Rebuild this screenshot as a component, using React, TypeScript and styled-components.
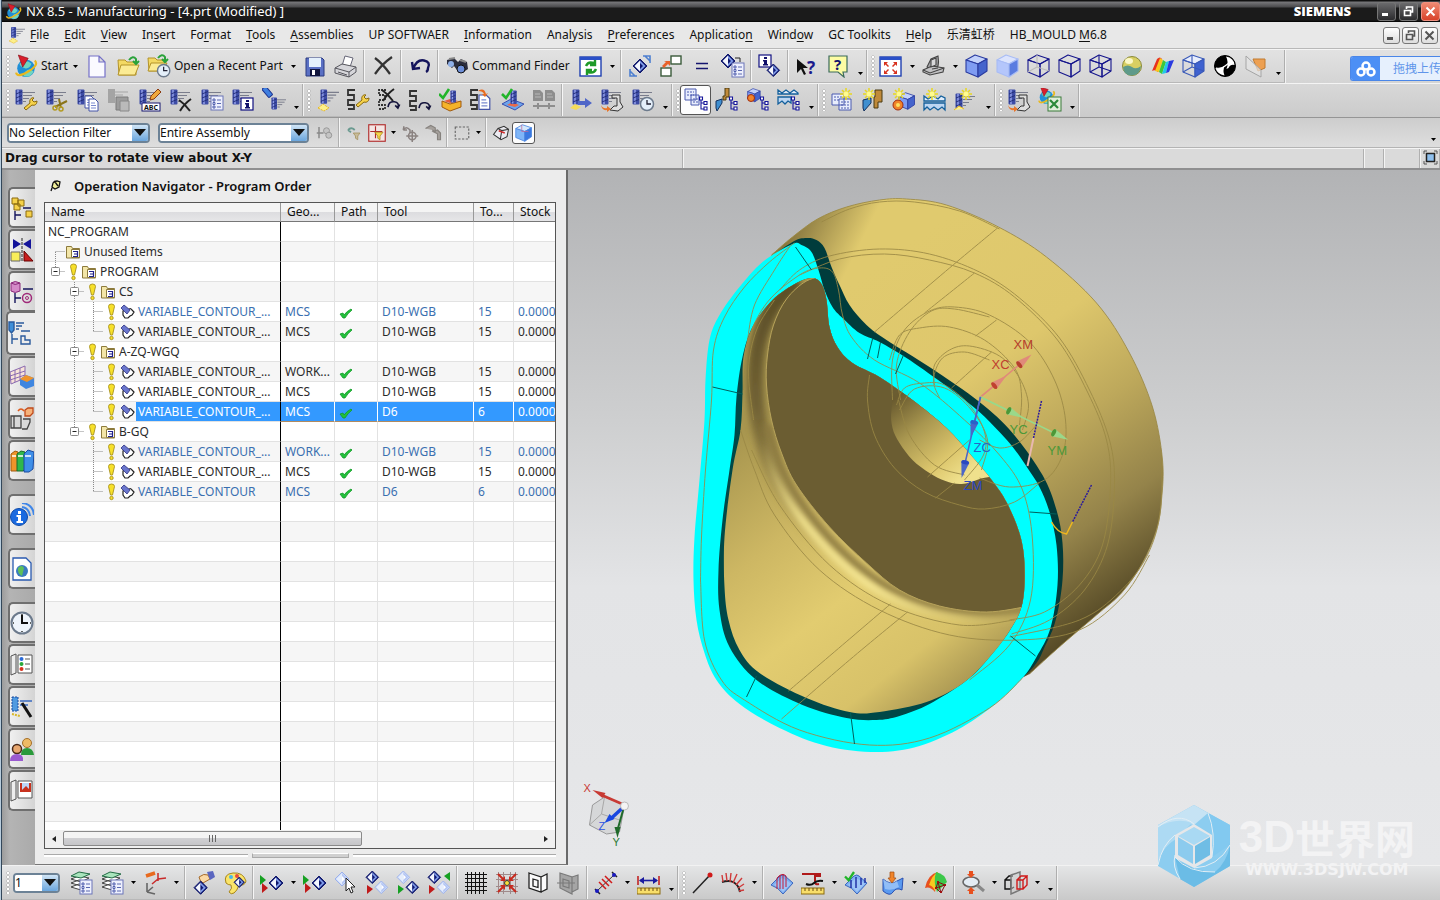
import React from 'react';
import styled, { createGlobalStyle, css } from 'styled-components';

const GlobalStyle = createGlobalStyle`
  * { box-sizing: border-box; }
  html, body { margin: 0; padding: 0; }
  body {
    font-family: "Noto Sans", "Noto Sans CJK SC", sans-serif;
    font-size: 12px;
    line-height: 16px;
    color: #111;
    background: #d9d9d9;
    overflow: hidden;
  }
  button, select { font: inherit; color: inherit; }
`;

/* ---------- icon pieces (24 x 24 grid) ---------- */

type Pos = { x?: number; y?: number; s?: number };
const at = ({ x = 0, y = 0, s = 1 }: Pos) => `translate(${x} ${y}) scale(${s})`;

const Drill = (p: Pos & { lines?: boolean; c?: string }) => {
  const { lines = true, c = '#3d4ca6' } = p;
  return (
    <g transform={at(p)}>
      {lines && <path d="M7 3.500h13M8 6.500h9M8 9.500h6M8 12.500h3" stroke="#7a7d8c" strokeWidth="1.200" />}
      <rect x="0.500" y="0.500" width="7" height="15" rx="1" fill={c} />
      <path d="M3 1v14" stroke="#8e9be6" strokeWidth="1.600" />
      <path d="M1 5l6-2.500M1 9l6-2.500M1 13l6-2.500" stroke="#1f2a74" strokeWidth=".9" />
    </g>
  );
};
const Wrench = (p: Pos) => (
  <g transform={at(p)}>
    <path d="M1 11L7 6C6 3 8 0 11 1L9 3l2 2 3-1c0 3-2 5-5 4L3 13Z" fill="#f6d24a" stroke="#8a6a10" strokeWidth="1" />
  </g>
);
const Cross = (p: Pos & { c?: string }) => (
  <path transform={at(p)} d="M0 1Q6 5 11 12M12 0Q5 5 1 12" fill="none" stroke={p.c || '#222'} strokeWidth="2" />
);
const Sheet = (p: Pos & { c?: string }) => (
  <g transform={at(p)}>
    <path d="M0 0h6l3 3v9H0Z" fill={p.c || '#fff'} stroke="#4454a8" />
    <path d="M2 4h4M2 6.500h5M2 9h5" stroke="#7a8ad0" />
  </g>
);
const ListBox = (p: Pos) => (
  <g transform={at(p)}>
    <rect width="12" height="14" fill="#eef0fd" stroke="#6a74b8" />
    <path d="M2 3h2v2H2zM2 6.500h2v2H2zM2 10h2v2H2z" fill="none" stroke="#4454a8" strokeWidth=".9" />
    <path d="M6 4h4M6 7.500h4M6 11h4" stroke="#5a68b0" />
  </g>
);
const InfoBox = (p: Pos) => (
  <g transform={at(p)}>
    <rect width="12" height="12" fill="#fff" stroke="#101080" strokeWidth="1.200" />
    <path d="M5 2h3v2H5zM4 5h4v4h1v1.500H4V9h1V6.500H4z" fill="#10106a" />
  </g>
);
const Clock = (p: Pos) => (
  <g transform={at(p)}>
    <circle cx="7" cy="7" r="6.500" fill="#e4effa" stroke="#6c7a8c" strokeWidth="1.500" />
    <path d="M7 3v4h4" fill="none" stroke="#223" strokeWidth="1.300" />
  </g>
);
const Diamond = (p: Pos & { faded?: boolean }) => (
  <g transform={at(p)}>
    <path d="M7 0l7 7-7 7-7-7Z" fill={p.faded ? '#cfdcfa' : '#10186e'} stroke={p.faded ? '#9ab0ec' : '#10186e'} />
    <path d="M7 1.500L1.500 7 7 12.500Z" fill={p.faded ? '#e6eefc' : '#f4f7ff'} />
    <path d="M7 1.500L12.500 7 7 12.500Z" fill={p.faded ? '#b4c6f4' : '#7f9cea'} />
    <path d="M7 4v6l3-3Z" fill={p.faded ? '#fff' : '#10186e'} />
  </g>
);
const Spark = (p: Pos) => (
  <g transform={at(p)}>
    <path d="M6 0v12M0 6h12M2 2l8 8M10 2l-8 8" stroke="#e8d820" strokeWidth="1.500" />
    <circle cx="6" cy="6" r="2.500" fill="#fffb90" />
  </g>
);
const Tree = (p: Pos) => (
  <g transform={at(p)} fill="none" stroke="#15159a" strokeWidth="1.100">
    <path d="M2 3v9h3M2 6h3" />
    <path d="M0.500 0h3v3h-3zM5 4.500h3v3H5zM5 10h3v3H5z" fill="#fff" />
  </g>
);
const Globe = (p: Pos) => (
  <g transform={at(p)}>
    <circle cx="10" cy="12" r="8" fill="#1f8fd8" />
    <path d="M4 8q6-5 11 0q-2 5-6 4t-5-4M8 19q0-5 6-6l3 2q-3 6-9 4" fill="#6fd6c0" />
    <path d="M18 5q4 4-6 10T1 16" fill="none" stroke="#e8b820" strokeWidth="2" />
    <path d="M3 0l9 3-5 8Z" fill="#d81e2c" stroke="#8a0f18" strokeWidth=".6" />
  </g>
);
const Snake = (p: Pos & { dash?: boolean }) => (
  <path transform={at(p)} d="M9 2H2v5h6v5H2v5h6v4H2" fill="none" stroke="#333" strokeWidth="1.800" strokeDasharray={p.dash ? '2 1' : undefined} />
);
const Check = (p: Pos) => (
  <path transform={at(p)} d="M0 5l4 4 6-9" fill="none" stroke="#22b52a" strokeWidth="2.600" />
);
const Cube = ({ fill, top, right, edges = '#15158c', inner, x = 0, y = 0, s = 1 }: Pos & { fill?: string; top?: string; right?: string; edges?: string; inner?: string }) => (
  <g transform={at({ x, y, s })} strokeLinejoin="round" stroke={edges} strokeWidth="1.100">
    <path d="M1 6L10 1l12 4-9 5Z" fill={top || 'none'} />
    <path d="M1 6l12 4v13L1 18Z" fill={fill || 'none'} />
    <path d="M13 10l9-5v12l-9 6Z" fill={right || 'none'} />
    {inner && <path d="M10 1v12l12 4M10 13l-9 5" fill="none" stroke={inner} />}
  </g>
);
const Go = (p: Pos) => (
  <g transform={at(p)}>
    <path d="M0 0l6 5-6 5Z" fill="#16a022" />
    <path d="M2 8l6 5-6 5Z" fill="#c01a1a" />
  </g>
);
const Layers = () => (
  <g>
    <path d="M2 16l8-3 10 2-8 4ZM2 12l8-3 10 2-8 4ZM2 8l8-3 10 2-8 4Z" fill="#fff" stroke="#444" />
    <path d="M2 5l8-4 11 2-9 4Z" fill="#a8e4bc" stroke="#226a44" />
    <ListBox x={11} y={9} />
  </g>
);
const Program = () => <Drill s={1} x={1} y={1} />;
const Ruler = (p: Pos) => (
  <g transform={at(p)}>
    <rect x="0" y="0" width="23" height="6" fill="#f8de6a" stroke="#8a6a10" />
    <path d="M4 0v3M8 0v3M12 0v3M16 0v3M20 0v3" stroke="#6a4a10" />
  </g>
);
const Redo = (p: Pos & { c?: string }) => (
  <path transform={at(p)} d="M0 8Q1 1 7 2T11 8M8 6l3 3 2-4" fill="none" stroke={p.c || '#14143c'} strokeWidth="1.800" />
);
const BluePatch = () => (
  <g>
    <path d="M1 14L10 5q3-2 5 0l8 7-10 11Q8 16 1 14Z" fill="#7fb0f2" stroke="#3a66c0" />
    <path d="M4 14l8-7q8 4 9 6l-8 8Q9 16 4 14Z" fill="#a9cdfa" opacity=".7" />
  </g>
);

const ICONS: Record<string, React.ReactNode> = {
  start: <Globe x={1} y={1} s={1.1} />,
  new: <path d="M4 2h10l6 6v15H4ZM14 2v6h6" fill="#fafaff" stroke="#7470c8" strokeWidth="1.200" />,
  open: <g><path d="M2 6h7l2 2h9v13H3Z" fill="#f3d963" stroke="#b3932a" /><path d="M5 11h18l-4 10H2Z" fill="#fbeb94" stroke="#b3932a" /><path d="M13 6q4-5 7-1v4M17 7l3 3 3-3" fill="none" stroke="#2aa23a" strokeWidth="2" /></g>,
  recent: <g><path d="M1 4h7l2 2h8v11H2Z" fill="#f3d963" stroke="#b3932a" /><path d="M4 9h16l-4 8H1Z" fill="#fbeb94" stroke="#b3932a" /><path d="M11 4q4-5 7-1v4M15 5l3 3 3-3" fill="none" stroke="#2aa23a" strokeWidth="2" /><Clock x={10} y={10} s={.95} /></g>,
  save: <g><path d="M3 4h16l2 2v16H3Z" fill="#5a70c4" stroke="#2a3a80" /><path d="M6 4h12v9H6Z" fill="#e4f0fc" /><path d="M7 15h10v7H7Z" fill="#10143c" /><path d="M9 16h3v5H9Z" fill="#fff" /></g>,
  print: <g><path d="M8 12L11 2l8 2-3 9Z" fill="#fff" stroke="#667" /><path d="M1 14l7-4 14 3v5l-7 5-14-4Z" fill="#d6d6da" stroke="#55555c" /><path d="M1 14l14 4 7-5M15 18v5M4 18l9 3" fill="none" stroke="#55555c" /></g>,
  delete: <path d="M4 4Q12 10 19 20M21 3Q11 10 4 20" fill="none" stroke="#333" strokeWidth="2.200" />,
  undo: <path d="M4 8l1 7 7-1M5 15Q9 5 16 6.500T20 14Q20 17 18 18" fill="none" stroke="#14145c" strokeWidth="2.400" />,
  finder: <g><path d="M2 6l7-2 4 4 3-3 6 3 1 7-6 4-5-3-3-4-2 2-5-4Z" fill="#2a2c3c" /><circle cx="6" cy="10" r="3" fill="#8fb0e8" /><circle cx="16" cy="15" r="4" fill="#6d8fd8" stroke="#111" /><path d="M4 5l6-1M15 6l6 2" stroke="#888" strokeWidth="2" /></g>,
  refresh: <g><rect x="1" y="3" width="21" height="19" fill="#fff" stroke="#1f3fb0" strokeWidth="1.400" /><path d="M1 3h21v3H1Z" fill="#2a50c8" /><path d="M7 12q2-5 8-3M16 6v5h-5M17 15q-2 5-8 3M8 21v-5h5" fill="none" stroke="#1f9a28" strokeWidth="2.400" /></g>,
  orient: <g><Diamond x={5} y={5} /><path d="M15 2h7v7M9 22H2v-7M17 2l5 5M2 17l5 5" fill="none" stroke="#4d7fd0" strokeWidth="1.600" /></g>,
  move: <g><rect x="12" y="2" width="10" height="8" fill="#fff" stroke="#3a5a3a" strokeWidth="1.400" /><rect x="2" y="14" width="10" height="8" fill="#fff" stroke="#3a5a3a" strokeWidth="1.400" /><path d="M3 12l4-4-2-1h6v5l-2-2-4 4Z" fill="#e8622a" /></g>,
  equals: <path d="M6 9.500h12M6 14.500h12" stroke="#14146e" strokeWidth="1.600" />,
  props: <g><Diamond x={0} y={0} /><path d="M14 4h5v4" fill="none" stroke="#222" /><ListBox x={11} y={9} /></g>,
  info: <g><InfoBox x={1} y={1} /><Diamond x={9} y={10} s={.9} /></g>,
  whats: <g><path d="M2 5v14l4-4 3 6 2-1-3-6h5Z" fill="#111" /><text x="12" y="20" fontFamily="Noto Sans" fontWeight="700" fontSize="17" fill="#1a1a8c">?</text></g>,
  help: <g><path d="M3 2h18v16h-4l1 5-6-5H3Z" fill="#fdfca4" stroke="#3a6a5a" strokeWidth="1.200" /><text x="8" y="16" fontFamily="Noto Sans" fontWeight="700" fontSize="15" fill="#14146e">?</text></g>,
  fit: <g><rect x="1" y="3" width="21" height="19" fill="#fff" stroke="#1f3fb0" strokeWidth="1.400" /><path d="M1 3h21v3H1Z" fill="#2a50c8" /><path d="M5 8h4l-1.500 1.500L10 12l-1 1-2.500-2.500L5 12ZM18 8h-4l1.500 1.500L13 12l1 1 2.500-2.500L18 12ZM5 20h4l-1.500-1.500L10 16l-1-1-2.500 2.500L5 16ZM18 20h-4l1.500-1.500L13 16l1-1 2.500 2.500L18 16Z" fill="#d8321e" /></g>,
  rotate: <g stroke="#444" strokeWidth="1.100"><path d="M5 13L9 5l7-3q1 6 0 10l-8 4Z" fill="#a4a4a6" /><path d="M1 16l9-4 12 2-1 4-13 3-7-3Z" fill="#c2c2c4" /><path d="M9 6l5-2v7l-5 2Z" fill="#d8d8da" /><path d="M1 16l7 3 14-5M10 15l6-1" fill="none" /></g>,
  shadedEdges: <Cube top="#c3d2fb" fill="#7f9cf2" right="#4564cc" edges="#2a3ba0" />,
  shaded: <Cube top="#dce4fd" fill="#b4c6fb" right="#5a7ce0" edges="#a8bcf5" />,
  wireDim: <Cube inner="#bbb" />,
  wireHidden: <Cube />,
  wireStatic: <Cube inner="#15158c" />,
  studio: <g><circle cx="12" cy="12" r="9.500" fill="#d8cf62" stroke="#8a8a3a" /><path d="M3 13q5-3 9 0t9-1q-1 9-9 9.500T3 13" fill="#5e9a8a" /><ellipse cx="9" cy="7" rx="4" ry="3" fill="#fbf8c8" /></g>,
  analysis: <g><path d="M1 17L6 5q3-3 5 0l-4 13q-3-3-6-1" fill="#e8321e" /><path d="M4 17L9 4l3 2-4 12Z" fill="#f8c81e" /><path d="M8 18l4-12 3 2-4 12Z" fill="#3cc83c" /><path d="M11 20l4-12 3-1-3 12Z" fill="#22c8e8" /><path d="M15 19l3-12 5-1-5 12Z" fill="#2a3ae0" /></g>,
  partial: <Cube right="#3f62d0" top="#e8eefc" edges="#3a5ab8" inner="#3a5ab8" />,
  reflect: <g><circle cx="12" cy="12" r="10.500" fill="#000" stroke="#000" /><path d="M13 2.500Q21 4 21.500 11q-4-1-6 3l-2 1Q16 8 13 2.500Z" fill="#fff" /><path d="M2.500 14q6 1 9-2-2 5 0 9.500Q4 20 2.500 14Z" fill="#fff" /><path d="M3 14q6 1 9-2t7-4" fill="none" stroke="#fff" strokeWidth="1.200" /></g>,
  section: <g><path d="M9 5h12v9l-7 3Z" fill="#eda052" stroke="#c07a30" /><path d="M2 2l15 14v7L2 15Z" fill="#e4e4e4" fillOpacity=".7" stroke="#a5a5a5" /></g>,

  opEdit: <g><Program /><Wrench x={9} y={9} /></g>,
  opCut: <g><Program /><path d="M10 19l12-6M14 11l2 9" stroke="#8a741a" strokeWidth="2" /><circle cx="10" cy="20" r="2" fill="none" stroke="#b39a20" strokeWidth="1.500" /><circle cx="16" cy="21" r="2" fill="none" stroke="#b39a20" strokeWidth="1.500" /></g>,
  opCopy: <g><Program /><Sheet x={9} y={8} /><Sheet x={13} y={11} /></g>,
  opPaste: <g opacity=".8"><path d="M1 1h7v14H1Z" fill="#999" /><path d="M8 4h13M8 7h8" stroke="#999" strokeWidth="1.200" /><path d="M9 9h12v13H9Z" fill="#8f8f8f" stroke="#666" /><path d="M13 13h9v10h-9Z" fill="#b5b5b5" stroke="#777" /></g>,
  opRename: <g><Program /><path d="M12 12l1-4 7-7 3 3-7 7Z" fill="#f0a83a" stroke="#8a3a10" /><rect x="4" y="15" width="18" height="8" fill="#fff" stroke="#14146e" /><text x="6" y="22" fontFamily="Noto Sans" fontSize="7" fontWeight="700" fill="#111">ABC</text></g>,
  opDelete: <g><Program /><Cross x={10} y={11} /></g>,
  opProps: <g><Program /><ListBox x={11} y={8} /></g>,
  opInfo: <g><Program /><InfoBox x={10} y={10} /></g>,
  opShow: <g><g transform="rotate(-40 6 4)"><rect x="3" y="-2" width="5" height="11" rx="1" fill="#3f7fe0" stroke="#1a2f8c" /></g><Drill x={9} y={9} s={.8} /></g>,
  generate: <g><Drill x={5} y={1} s={.95} /><path d="M3 20l5-4 6 4-5 3Z" stroke="#e8b820" fill="#fdf08a" strokeDasharray="2 1" /></g>,
  pathEdit: <g><Snake /><Wrench x={9} y={6} /></g>,
  pathDelete: <g><Snake x={0} dash /><Cross x={5} y={1} /><Redo x={11} y={12} s={.9} /></g>,
  pathReplay: <g><Snake x={0} y={1} /><Redo x={11} y={13} s={.9} /></g>,
  verify: <g><path d="M3 13l8 3 11-3v6l-11 4-8-4Z" fill="#f5b32a" stroke="#a05a10" /><path d="M5 13l6 2 8-2-8-2Z" fill="#e85a3a" /><Drill x={11} y={2} lines={false} s={.8} /><Check x={0} y={1} /></g>,
  listPath: <g><Snake x={-1} y={0} /><Sheet x={9} y={7} s={1.2} /><path d="M8 3q6-4 8 3l2-1-3 4-3-3h2q-1-3-6-3" fill="#e86a1e" /></g>,
  simulate: <g><path d="M1 16l9-5 13 5-9 6Z" fill="#6da5ec" stroke="#3a50b0" /><path d="M6 17l5-3 7 3-4 2Z" fill="#e86a4a" /><Drill x={9} y={2} lines={false} s={.9} /><Check x={1} y={1} /></g>,
  compare: <g fill="#8e8e8e"><path d="M1 2h7l3 3v8H1ZM13 2h7l3 3v8H13Z" /><path d="M1 18h22M6 15v6M17 15v6" stroke="#8e8e8e" strokeWidth="2" /><path d="M3 6h5M3 9h6M15 6h5M15 9h6" stroke="#b8b8b8" /></g>,
  feed: <g><Drill x={3} y={1} lines={false} /><path d="M9 13h7v-3l7 5-7 5v-3H9Z" fill="#4f66c8" /><path d="M1 20l5-4 6 3-5 3Z" fill="#f4dc5a" /></g>,
  post: <g><Program /><path d="M12 7h8v7l3 5-5 4-8-1 4-4h3v-8h-5Z" fill="#dedede" stroke="#333" /><path d="M1 17q2 4 6 3v-2l4 3-4 3v-2q-5 1-6-5" fill="#e8762a" /></g>,
  shop: <g><Program /><Clock x={9} y={9} /></g>,
  viewProgram: <g><path d="M1 1h11v11H1ZM7 7h8v10H7Z" fill="#e8edfc" stroke="#4a5ab0" /><path d="M3 4h7M3 7h7M9 11h5M9 14h5" stroke="#4a5ab0" strokeDasharray="2 1" /><Tree x={15} y={9} /></g>,
  viewTool: <g><path d="M10 0h4v9h-3v3H8V8h2Z" fill="#c08a3a" stroke="#4a3a10" /><path d="M1 13l6-2v4l-5 8-1-3Z" fill="#3f8fd0" stroke="#14305c" /><Tree x={14} y={9} /></g>,
  viewGeom: <g><Cube x={1} y={0} s={.6} top="#c3d2fb" fill="#7f9cf2" right="#4564cc" edges="#2a3ba0" /><circle cx="5" cy="10" r="3.500" fill="#f0842a" stroke="#a02a10" /><Tree x={14} y={9} /></g>,
  viewMethod: <g><path d="M1 6V2l4 3 4-3 4 3 4-3 4 3V6Z" fill="#e0ecfa" stroke="#14609c" strokeWidth="1.300" /><path d="M1 9h13v6l-3-2-3 3-3-3-4 3Z" fill="#bcd6f2" stroke="#14609c" strokeWidth="1.300" /><Tree x={14} y={9} /></g>,
  newProgram: <g><path d="M2 6h12v11H2ZM9 11h12v11H9Z" fill="#e8edfc" stroke="#4a5ab0" /><path d="M4 9h8M4 12h5M11 14h8M11 17h8M11 20h8" stroke="#4a5ab0" strokeDasharray="2 1" /><Spark x={10} y={0} /></g>,
  newTool: <g><path d="M14 2h7v12h-4v6h-4V9h1Z" fill="#c08a3a" stroke="#4a3a10" /><path d="M2 12l8-2v5l-7 8-1-3Z" fill="#3f8fd0" stroke="#14305c" /><Spark x={2} y={0} /></g>,
  newGeom: <g><Cube x={6} y={4} s={.75} top="#c3d2fb" fill="#7f9cf2" right="#4564cc" edges="#2a3ba0" /><circle cx="6" cy="17" r="5" fill="#f0842a" stroke="#a02a10" /><circle cx="6" cy="17" r="2" fill="#fce060" /><Spark x={1} y={0} /></g>,
  newMethod: <g><path d="M1 13V8l4 3 5-3 5 3 3-3 4 2v3Z" fill="#e0ecfa" stroke="#14609c" strokeWidth="1.300" /><path d="M1 15h21v7l-3-3-4 3-4-3-4 3-3-3-3 3Z" fill="#bcd6f2" stroke="#14609c" strokeWidth="1.300" /><Spark x={3} y={0} /></g>,
  newOp: <g><Drill x={1} y={5} /><Spark x={6} y={0} /><path d="M0 22l5-4 5 3" fill="#fdf08a" stroke="#e8b820" /></g>,
  excel: <g><Globe x={0} y={-1} s={.85} /><rect x="10" y="9" width="13" height="14" fill="#dfeeda" stroke="#3a7a3a" /><path d="M12 12l8 8M20 12l-8 8" stroke="#2a8a3a" strokeWidth="2.200" /></g>,

  layers: <Layers />,
  wcs: <g fill="none"><path d="M3 5l9-3" stroke="#e86a1e" strokeWidth="3.500" /><path d="M15 2v8M15 8l8-1M15 8l-6 5" stroke="#c82a2a" strokeWidth="1.500" /><path d="M4 12v9M4 21l8 2M4 21l6-5" stroke="#666" strokeWidth="1.600" /></g>,
  handDiamond: <g><path d="M7 6q5-4 9-2l2 4-7 4q-3-1-4-6" fill="#fbd9a4" stroke="#a56a2a" /><path d="M15 1l6-1 2 6-5 3Z" fill="#5a66c0" /><Diamond x={2} y={10} s={.95} /></g>,
  palette: <g><path d="M3 12Q0 3 10 2t13 8q-1 5-7 4-2 6-5 8t-5-1q4-4 2-7-3 0-5-2" fill="#fae46a" stroke="#a8861a" /><circle cx="8" cy="6" r="2" fill="#48b8e8" /><circle cx="14" cy="5" r="2" fill="#e84a3a" /><Diamond x={11} y={6} s={.75} /></g>,
  goDiamond: <g><Go x={0} y={4} /><Diamond x={9} y={5} /></g>,
  pickDiamond: <g><Diamond x={1} y={1} faded /><path d="M12 7v13l3-3 2 5 2-1-2-5h4Z" fill="#fff" stroke="#222" /></g>,
  two1: <g><Diamond x={1} y={0} s={.9} /><Diamond x={10} y={10} s={.9} faded /><path d="M2 14l6 4-6 5Z" fill="#c01a1a" /></g>,
  two2: <g><Diamond x={1} y={0} s={.9} faded /><Diamond x={10} y={10} s={.9} /><path d="M2 14l6 4-6 5Z" fill="#16a022" /></g>,
  two3: <g><Diamond x={1} y={0} s={.9} /><Diamond x={10} y={10} s={.9} faded /><path d="M2 14l6 4-6 5Z" fill="#c01a1a" /><path d="M23 1v9l-6-5Z" fill="#16a022" /></g>,
  grid: <path d="M3.500 1v22M7.500 1v22M11.500 1v22M15.500 1v22M19.500 1v22M1 3.500h22M1 7.500h22M1 11.500h22M1 15.500h22M1 19.500h22" stroke="#111" strokeWidth="1" />,
  snapGrid: <g><path d="M3.500 1v22M8.500 1v22M15.500 1v22M20.500 1v22M1 3.500h22M1 8.500h22M1 15.500h22M1 20.500h22" stroke="#a08a8a" /><path d="M3 3l7 7M21 3l-7 7M3 21l7-7M21 21l-7-7" stroke="#c82a1e" strokeWidth="2" /><path d="M10 5v5H5ZM14 5v5h5ZM10 19v-5H5ZM14 19v-5h5Z" fill="#c82a1e" /><circle cx="12" cy="12" r="2.500" fill="#f8e03a" stroke="#333" /></g>,
  plane: <path d="M3 2l12 4v15L3 17ZM15 6l6-3v15l-6 3M7 8l5 1.500v7L7 15Z" fill="#fafafa" stroke="#222" strokeWidth="1.300" />,
  planeDim: <path d="M3 2l12 4v17L3 17ZM15 6l6-2v14l-6 3M6 8l6 2v7l-6-2ZM0 12h18" fill="#a5a5a5" stroke="#7a7a7a" strokeWidth="1.200" />,
  distance: <g><path d="M1 18l5 5M18 1l5 5" stroke="#222" strokeWidth="1.500" /><path d="M3 20L20 4" stroke="#333" /><path d="M5 11l7 7M8 8l7 7M11 5l7 7" stroke="#d01a1a" strokeWidth="1.500" /><circle cx="3" cy="20" r="2" fill="#1a1ac0" /><circle cx="20" cy="4" r="2" fill="#1a1ac0" /></g>,
  measure: <g><path d="M1 5v9M22 5v9" stroke="#c01a1a" strokeWidth="1.500" /><path d="M3 9.500h17" stroke="#1a1aa0" strokeWidth="1.600" /><path d="M7 6L2 9.500 7 13ZM16 6l5 3.500-5 3.500Z" fill="#1a1aa0" /><Ruler x={0} y={17} /></g>,
  line: <g><path d="M3 22L20 4" stroke="#222" strokeWidth="1.500" /><circle cx="20" cy="4" r="2.500" fill="#d01a1a" /></g>,
  comb: <g><path d="M1 11Q16 7 19 21" fill="none" stroke="#222" strokeWidth="2" /><path d="M2 11L1 4M6 10L5 2M9 11l1-9M12 12l4-9M15 14l6-7M17 17l6-4M18 20l5-1" stroke="#d03a3a" strokeWidth="1.400" /></g>,
  faceCurve: <g><BluePatch /><path d="M7 18V7M10 18V4M13 18V3M16 16V5M7 7q5-6 9-2" fill="none" stroke="#c01a3a" /></g>,
  gauge: <g><path d="M1 3h18v2h-5v6q0 3 4 2" fill="none" stroke="#b01a1a" strokeWidth="2" /><path d="M5 13q5 2 8-1t9-2" fill="none" stroke="#111" strokeWidth="2" /><Ruler x={0} y={17} /></g>,
  checkPatch: <g><BluePatch /><path d="M7 17V9M12 17V6M17 14V7M21 12V7" stroke="#1a2aa0" strokeWidth="1.400" /><Check x={1} y={1} s={.9} /></g>,
  draft: <g><path d="M2 8q8 7 14 2l6-3-1 12q-6-3-9 2t-10-1Z" fill="#5a9af0" stroke="#2a50b0" /><path d="M2 8q8 7 14 2l2 6q-7 4-14 2Z" fill="#a9cdfa" opacity=".7" /><path d="M9 1h4v6h2l-4 5-4-5h2Z" fill="#f0842a" stroke="#a04a10" strokeWidth=".7" /></g>,
  rainbow: <g><path d="M1 17Q4 3 14 1l-3 20Q6 15 1 17" fill="#e8501e" /><path d="M5 14Q8 4 14 1l-3 19Q9 15 5 14Z" fill="#f8c81e" /><path d="M12 1q9 2 11 10l-10 10q-4-10-1-20Z" fill="#3cc84a" /><path d="M14 11l7 3-4 8-5-5ZM14 11l3 11M12 17l9-3" fill="none" stroke="#801010" /><path d="M13 10h2v2h-2zM20 13h2v2h-2zM16 20h2v2h-2zM11 16h2v2h-2z" fill="#a01010" /></g>,
  magnify: <g><ellipse cx="10" cy="11" rx="8" ry="5" fill="#e4ecf4" stroke="#666" strokeWidth="1.600" /><path d="M16 14l7 6" stroke="#888" strokeWidth="3" /><path d="M8 0h4v3h2l-4 4-4-4h2ZM8 23h4v-3h2l-4-4-4 4h2Z" fill="#e8501e" /></g>,
  sectionBox: <g fill="none" strokeWidth="1.400"><path d="M1 9h6v9H1ZM1 9l4-4h4M7 18l3-2" stroke="#111" /><path d="M7 4l9-3v18l-9 4Z" fill="#ccc" fillOpacity=".5" stroke="#777" /><path d="M13 9h6v9h-6ZM13 9l4-4h6l-4 4M23 5v9l-4 4" stroke="#d01a1a" /></g>,

  sOp: <g stroke="#8a8a8a" fill="#c4c4c4"><path d="M4 4v15M1 12h9" strokeWidth="2" /><circle cx="14" cy="9" r="4" /><circle cx="17" cy="15" r="4" /></g>,
  sFilter: <g><path d="M4 8q4-5 9 0M4 8l5-3M4 8l4 3" fill="none" stroke="#6a9a90" strokeWidth="2.400" /><path d="M11 12h9l-3 4v5l-3-2v-3Z" fill="#c8bc9a" stroke="#a08e5a" /></g>,
  sBox: <g><rect x="1" y="1" width="22" height="22" fill="#f4e6e4" stroke="#b02a2a" strokeWidth="1.500" /><path d="M10 3v16M3 10h16" stroke="#b02a2a" strokeWidth="1.500" /><path d="M9 11h11l-4 5v5l-3-2v-3Z" fill="#f5d848" stroke="#a8861a" /></g>,
  sDim: <g fill="none" stroke="#8a8280" strokeWidth="2"><path d="M3 8q4-6 9 0v4M3 8l1-5M3 8l5 0" /><circle cx="15" cy="16" r="5" /><path d="M15 8v16M7 16h16" /></g>,
  sHammer: <path d="M2 6l7-4 6 3v5l-4-2M12 10l6-2 4 4v9h-4v-8Z" fill="#a5a09c" stroke="#86827e" strokeWidth="1.500" />,
  sRect: <path d="M3 4h18v16H3Z" fill="none" stroke="#666" strokeWidth="1.500" strokeDasharray="3 2" />,
  sCube1: <g><path d="M2 14L8 6l8-3 6 4-2 10-8 4ZM8 6l5 3 9-2M13 9l-2 12" fill="#ececf2" stroke="#333" strokeWidth="1.400" /><path d="M9 9l8 3" stroke="#d02a2a" strokeWidth="2" /></g>,
  sCube2: <g><Cube top="#d4e8fd" fill="#7fb6f8" right="#3a78e0" edges="#4a86e0" /><path d="M9 1v9h9" fill="none" stroke="#c06a9a" /></g>,

  tAssembly: <g fill="#f5d14a" stroke="#8a6a10"><path d="M2 2h6v6H2ZM4 8h6v6H4ZM8 4h6v6H8Z" /><path d="M16 15h6v6h-6Z" /><path d="M13 12h8M5 15v9M5 19h6" stroke="#14145c" strokeWidth="1.400" /></g>,
  tConstraint: <g><path d="M3 1l8 5-8 5ZM21 1l-8 5 8 5Z" fill="#14149a" /><path d="M12 0v24" stroke="#222" strokeDasharray="3 1" /><path d="M1 14h9v9H1Z" fill="#f8ee5a" stroke="#666" /><path d="M14 13l9 10h-9Z" fill="#c81e1e" stroke="#600" /></g>,
  tPart: <g fill="none"><path d="M1 3v8q4 3 9 0V3q-5-3-9 0q4 3 9 0" fill="#d48ac8" stroke="#8a2a7a" /><path d="M13 9h10M5 13v10M5 18h6" stroke="#14145c" strokeWidth="1.400" /><circle cx="17" cy="18" r="4.500" stroke="#a02a7a" strokeWidth="1.500" /><circle cx="17" cy="18" r="1.500" stroke="#a02a7a" /></g>,
  tNav: <g fill="none" stroke="#2a5a9c" strokeWidth="1.400"><path d="M1 1h5v8l-2.500 3L1 9Z" fill="#3f8fd8" /><path d="M8 2h8M8 5h6M8 8h3M13 10h9M4 13v10M4 18h6" /><path d="M13 15h4v4h5v4h-9Z" /></g>,
  tMachine: <g><path d="M0 7l15-6v12L1 19ZM0 11l15-5M0 15l15-5M5 5v12M10 3v12" fill="#f8e4d8" stroke="#8a6ab0" /><path d="M10 14l6-4 8 3v8l-8 3-6-4Z" fill="#3f86e0" /><path d="M10 14l6-4 8 3-7 4Z" fill="#f0942a" /></g>,
  tWizard: <g fill="#d8d8d8" stroke="#444"><path d="M1 9h10v12H1ZM4 9v12M13 12h7v3l-3 7h-5" strokeWidth="1.300" /><path d="M8 4q3-4 6 0" fill="none" stroke="#e05a1a" strokeWidth="1.500" /><path d="M15 3l3-2h5v5l-3 3h-5Z" fill="#f6b27a" stroke="#c04a1a" strokeWidth="1.300" /></g>,
  tBooks: <g strokeWidth="1"><path d="M1 5l4-3 3 1v16l-1 3H1Z" fill="#f0942a" stroke="#a05a10" /><path d="M7 5l4-3 4 1v17l-2 2H7Z" fill="#2fb84a" stroke="#1a6a2a" /><path d="M14 5l4-4 6 2-1 17-4 3h-5Z" fill="#3f8fe8" stroke="#1a4aa0" /><path d="M2 7h4M8 7h5M15 7h6" stroke="#fff" strokeWidth="1.500" /></g>,
  tHd3d: <g><circle cx="9" cy="14" r="8.500" fill="#1a6ae0" stroke="#0f4aa8" /><path d="M8 8h3v3H8zM6.500 12H11v6h2v2H6.500v-2H8v-4H6.500z" fill="#fff" /><path d="M12 4q7 1 8 9M12 0q11 1 12 12" fill="none" stroke="#3f86e8" strokeWidth="2" /></g>,
  tWeb: <g><path d="M3 1h13l5 5v17H3Z" fill="#fff" stroke="#2a5ab0" strokeWidth="1.300" /><circle cx="12" cy="14" r="6" fill="#3a7ac0" /><path d="M8 11q4-4 6 0l-2 8q-5-3-4-8" fill="#5ec05a" /></g>,
  tClock: <g><circle cx="12" cy="12" r="10.500" fill="#eef4fb" stroke="#6c7a8c" strokeWidth="2" /><path d="M12 4v8h6" fill="none" stroke="#111" strokeWidth="2" /><path d="M12 3v1M12 20v1M3 12h1M20 12h1" stroke="#333" strokeWidth="1.500" /></g>,
  tRoles: <g><path d="M1 3l5-2v19l-5 2Z" fill="#eee" stroke="#555" /><path d="M8 2h14v18H8Z" fill="#fff" stroke="#555" /><circle cx="11.500" cy="6" r="2" fill="#2a6ad8" /><circle cx="11.500" cy="11" r="2" fill="#2aa83a" /><circle cx="11.500" cy="16" r="2" fill="#d8321e" /><path d="M15 6h5M15 11h5M15 16h5" stroke="#555" /></g>,
  tDrill: <g><path d="M2 2h6v14H2Z" fill="#4f9ae0" stroke="#1a4aa0" strokeDasharray="2 1" /><path d="M10 6h12M10 10h8" stroke="#3a6ac0" strokeWidth="1.500" /><path d="M12 8l9 14" stroke="#111" strokeWidth="3" /><path d="M2 19l8 2" stroke="#d8b82a" strokeWidth="2" strokeDasharray="2 1" /></g>,
  tPeople: <g><circle cx="17" cy="6" r="4.500" fill="#eebb66" stroke="#a5702a" /><path d="M11 18q0-7 6-7t7 7Z" fill="#2a9a3a" /><circle cx="7" cy="12" r="4.500" fill="#e8a870" stroke="#4a2a1a" strokeWidth="1.500" /><path d="M0 24q0-7 7-7t6 7Z" fill="#9a5ad0" /></g>,
  tScene: <g><path d="M1 3l5-2v19l-5 2Z" fill="#eee" stroke="#555" /><path d="M8 2h14v17H8Z" fill="#fff" stroke="#555" /><path d="M10 4h11v9H10Z" fill="#c8321e" /><path d="M12 4h7v6l-3-3-4 4Z" fill="#bcd6f8" /></g>,
};

const Icon = ({ name, size = 24 }: { name: string; size?: number }) => (
  <svg width={size} height={size} viewBox="0 0 24 24" fill="none" aria-hidden="true">{ICONS[name]}</svg>
);

/* ---------- chrome ---------- */

const Shell = styled.div`
  height: 100vh;
  min-height: 600px;
  display: flex;
  flex-direction: column;
  position: relative;
  overflow: hidden;
  border-left: 1px solid #b9cddd;
`;
const Frame = styled.div`
  flex: 1;
  min-height: 0;
  display: flex;
  flex-direction: column;
  border-left: 1px solid #33475a;
`;
const TitleBar = styled.header`
  height: 22px;
  flex: none;
  display: flex;
  align-items: center;
  padding-left: 3px;
  color: #fff;
  background: linear-gradient(#111 0, #111 1px, #77777a 2px, #4a4a4c 7px, #1b1b1b 8px, #1b1b1b 20px, #000 22px);
`;
const TitleText = styled.h1`
  margin: 0 0 0 4px;
  flex: 1;
  font-size: 13px;
  font-weight: 400;
  line-height: 20px;
`;
const Brand = styled.span`
  font-family: "Open Sans", sans-serif;
  font-weight: 800;
  font-size: 13px;
  margin-right: 26px;
`;
const WindowButton = styled.button<{ $close?: boolean }>`
  width: 19px;
  height: 19px;
  margin-right: 3px;
  padding: 0;
  display: grid;
  place-items: center;
  border: 1px solid ${(p) => (p.$close ? '#f09080' : '#777')};
  border-radius: 3px;
  background: ${(p) => (p.$close ? 'linear-gradient(#ef8a72, #d8432a)' : 'linear-gradient(#6a6a6c, #2c2c2e)')};
  &:last-child { margin-right: 0; }
`;
const MenuBar = styled.nav`
  height: 27px;
  flex: none;
  display: flex;
  align-items: center;
  padding-left: 5px;
  background: #e8e8e8;
  border-bottom: 1px solid #b8b8b8;
`;
const MenuList = styled.ul`
  list-style: none;
  flex: 1;
  display: flex;
  gap: 15px;
  margin: 0 0 0 5px;
  padding: 0;
  white-space: nowrap;
`;
const MenuButton = styled.button`
  border: 0;
  padding: 0;
  background: none;
  line-height: 20px;
  u { text-underline-offset: 2px; }
`;
const ChildButton = styled.button`
  width: 17px;
  height: 17px;
  margin-right: 2px;
  padding: 0;
  display: grid;
  place-items: center;
  border: 1px solid #777;
  border-radius: 3px;
  background: linear-gradient(#fff, #ddd);
`;
const Grip = styled.span`
  width: 8px;
  align-self: stretch;
  margin: 5px 0;
  flex: none;
  background: radial-gradient(circle at 6px 2px, #fff 1px, #aaa 1px, transparent 2px) 0 0 / 8px 4px;
`;
const ToolRow = styled.div<{ $shade: 'light' | 'mid' }>`
  height: ${(p) => (p.$shade === 'light' ? 34 : 35)}px;
  flex: none;
  display: flex;
  border-top: 1px solid #f4f4f4;
  ${(p) => p.$shade === 'light'
    ? css`background: linear-gradient(#e2e2e2, #d4d4d4);`
    : css`background: linear-gradient(#d8d8d8, #cbcbcb); border-bottom: 1px solid #959595;`}
`;
const Group = styled.div`
  display: flex;
  align-items: center;
  border-bottom: 1px solid #b8b8b8;
  box-shadow: 1px 0 0 #f2f2f2, inset -1px 0 0 #aeaeae;
`;
const Tool = styled.button<{ $on?: boolean; $small?: boolean }>`
  width: ${(p) => (p.$small ? 23 : 31)}px;
  height: ${(p) => (p.$small ? 22 : 30)}px;
  flex: none;
  padding: 0;
  display: grid;
  place-items: center;
  border: 1px solid ${(p) => (p.$on ? '#555' : 'transparent')};
  border-radius: 3px;
  background: ${(p) => (p.$on ? '#fdfdfd' : 'none')};
`;
const ToolLabel = styled.button<{ $w: number }>`
  width: ${(p) => p.$w}px;
  flex: none;
  border: 0;
  padding: 0;
  background: none;
  text-align: left;
  white-space: nowrap;
`;
const Rule = styled.span`
  width: 2px;
  margin: 0 2px;
  flex: none;
  align-self: stretch;
  border-left: 1px solid #b0b0b0;
  border-right: 1px solid #f6f6f6;
`;
const ArrowButton = styled.button<{ $low?: boolean; $small?: boolean }>`
  width: ${(p) => (p.$low ? 14 : p.$small ? 10 : 12)}px;
  height: 100%;
  flex: none;
  padding: ${(p) => (p.$low ? '14px 0 0' : '0')};
  border: 0;
  background: none;
  display: grid;
  place-items: center;
`;
const Caret = () => <svg width="5" height="3" aria-hidden="true"><path d="M0 0h5L2.500 3Z" fill="#000" /></svg>;

type Item = string | { label: string; w: number };
const Tools = ({ items, on, name, small }: { items: Item[]; on?: string; name: string; small?: boolean }) => (
  <Group role="toolbar" aria-label={name}>
    <Grip />
    <Strip items={items} on={on} small={small} />
  </Group>
);
const Strip = ({ items, on, small }: { items: Item[]; on?: string; small?: boolean }) => (
  <>
    {items.map((it, i) => {
      if (typeof it !== 'string') return <ToolLabel key={i} $w={it.w}>{it.label}</ToolLabel>;
      if (it === '|') return <Rule key={i} />;
      if (it === 'v') return <ArrowButton key={i} $small={small} aria-label="More options"><Caret /></ArrowButton>;
      if (it === 'V') return <ArrowButton key={i} $low aria-label="Toolbar options"><Caret /></ArrowButton>;
      return (
        <Tool key={i} $on={on === it} $small={small} aria-label={it}>
          <Icon name={it} size={small ? 18 : 24} />
        </Tool>
      );
    })}
  </>
);

const FilterRow = styled.div`
  height: 30px;
  flex: none;
  display: flex;
  align-items: center;
  padding-left: 5px;
  background: linear-gradient(#cdcdcd, #dedede);
  border-bottom: 1px solid #b4b4b4;
`;
const Picker = styled.span<{ $w: number; $m: string }>`
  width: ${(p) => p.$w}px;
  height: 20px;
  margin: ${(p) => p.$m};
  flex: none;
  display: flex;
  border: 2px solid #6c8296;
  border-radius: 4px;
  background: #fff;
  overflow: hidden;
`;
const PickerSelect = styled.select`
  flex: 1;
  min-width: 0;
  padding: 0;
  border: 0;
  appearance: none;
  background: #fff;
  line-height: 16px;
`;
const PickerArrow = styled.span`
  width: 16px;
  display: grid;
  place-items: center;
  background: linear-gradient(#cfe4f6, #6aa6de);
`;
const Dropdown = ({ value, w, name, m = '0 8px 0 0' }: { value: string; w: number; name: string; m?: string }) => (
  <Picker $w={w} $m={m}>
    <PickerSelect aria-label={name} defaultValue={value}><option>{value}</option></PickerSelect>
    <PickerArrow><svg width="12" height="7" aria-hidden="true"><path d="M0 0h12L6 7Z" fill="#111" /></svg></PickerArrow>
  </Picker>
);
const Spacer = styled.span`flex: 1;`;
const StatusRow = styled.div`
  height: 22px;
  flex: none;
  display: flex;
  align-items: stretch;
  background: #dadada;
  border-top: 1px solid #f4f4f4;
  border-bottom: 2px solid #8f8f90;
`;
const StatusCell = styled.span<{ $w?: number }>`
  ${(p) => (p.$w ? `width: ${p.$w}px;` : 'flex: 1;')}
  display: flex;
  align-items: center;
  padding: 0 0 2px 3px;
  font-family: "DejaVu Sans", sans-serif;
  font-weight: 700;
  border-right: 1px solid #b0b0b0;
  box-shadow: 1px 0 0 #f4f4f4;
`;

/* ---------- navigator ---------- */

const Body = styled.main`
  flex: 1;
  min-height: 0;
  display: flex;
`;
const Side = styled.aside`
  width: 33px;
  flex: none;
  padding: 16px 0 0 5px;
  background: linear-gradient(90deg, #9c9c9c, #b4b4b4 8px, #aaa);
`;
const SideTab = styled.button<{ $active?: boolean; $gap?: boolean }>`
  width: 27px;
  height: 41px;
  margin: ${(p) => (p.$gap ? '13px' : '1px')} 0 0 1px;
  padding: 0;
  display: flex;
  align-items: center;
  border: 2px solid #6f6f6f;
  border-right: 0;
  border-radius: 5px 0 0 5px;
  background: linear-gradient(90deg, #f0f0f0, #d4d4d4);
  ${(p) => p.$active && css`
    height: 44px;
    width: 29px;
    margin: -1px 0 0 -1px;
    background: #ececec;
  `}
`;
const Panel = styled.section`
  width: 533px;
  flex: none;
  display: flex;
  flex-direction: column;
  padding: 0 10px 0 9px;
  background: #ececec;
  border-right: 2px solid #6a6a6a;
  border-bottom: 1px solid #777;
`;
const PanelTitle = styled.h2`
  height: 32px;
  margin: 0;
  display: flex;
  align-items: center;
  gap: 12px;
  padding-left: 5px;
  font-size: 13px;
  font-weight: 600;
`;
const TableBox = styled.div`
  flex: 1;
  min-height: 0;
  display: flex;
  flex-direction: column;
  border: 1px solid #555;
  background: #fff;
`;
const Clip = styled.div`
  flex: 1;
  min-height: 0;
  overflow: hidden;
`;
const Table = styled.table`
  width: 100%;
  table-layout: fixed;
  border-collapse: separate;
  border-spacing: 0;
`;
const Th = styled.th`
  height: 19px;
  padding: 0 0 0 6px;
  font-weight: 400;
  text-align: left;
  line-height: 18px;
  white-space: nowrap;
  background: linear-gradient(#f4f4f4 50%, #dcdcdf 50%, #e6e6e8);
  border-right: 1px solid #999;
  border-bottom: 1px solid #777;
  &:last-child { border-right: 0; }
`;
const Tr = styled.tr<{ $alt?: boolean; $blue?: boolean; $sel?: boolean }>`
  background: ${(p) => (p.$alt ? '#f6f6f6' : '#fff')};
  color: ${(p) => (p.$sel ? '#fff' : p.$blue ? '#3a6fb0' : '#2b2b2b')};
  ${(p) => p.$sel && css`
    td:not(:first-child) { background: #3399ff; border-color: #b08a60 #fff #b08a60 transparent; }
  `}
`;
const Td = styled.td`
  height: 20px;
  padding: 1px 0 0 4px;
  border-right: 1px solid #e2e2e2;
  border-bottom: 1px solid #e2e2e2;
  line-height: 18px;
  white-space: nowrap;
  overflow: hidden;
  &:first-child { border-right: 1px solid #000; padding: 0; }
  &:last-child { border-right: 0; }
  svg { vertical-align: middle; }
`;
const NameCell = styled.div`
  display: flex;
  height: 19px;
  align-items: center;
`;
const NameText = styled.span<{ $sel?: boolean; $root?: boolean }>`
  flex: 1;
  height: 19px;
  padding-left: ${(p) => (p.$root ? 3 : 2)}px;
  line-height: 20px;
  overflow: hidden;
  background: ${(p) => (p.$sel ? '#3399ff' : 'none')};
`;

type RowData = { kind: 'root' | 'unused' | 'group' | 'op'; level: number; name: string; geo?: string; tool?: string; t?: string; blue?: boolean; sel?: boolean; last?: boolean; more?: boolean };
const V = 'VARIABLE_CONTOUR_...';
const ROWS: RowData[] = [
  { kind: 'root', level: 0, name: 'NC_PROGRAM' },
  { kind: 'unused', level: 1, name: 'Unused Items' },
  { kind: 'group', level: 1, name: 'PROGRAM', last: true },
  { kind: 'group', level: 2, name: 'CS' },
  { kind: 'op', level: 3, name: V, geo: 'MCS', tool: 'D10-WGB', t: '15', blue: true, more: true },
  { kind: 'op', level: 3, name: V, geo: 'MCS', tool: 'D10-WGB', t: '15', last: true, more: true },
  { kind: 'group', level: 2, name: 'A-ZQ-WGQ' },
  { kind: 'op', level: 3, name: V, geo: 'WORK...', tool: 'D10-WGB', t: '15', more: true },
  { kind: 'op', level: 3, name: V, geo: 'MCS', tool: 'D10-WGB', t: '15', more: true },
  { kind: 'op', level: 3, name: V, geo: 'MCS', tool: 'D6', t: '6', sel: true, last: true, more: true },
  { kind: 'group', level: 2, name: 'B-GQ', last: true },
  { kind: 'op', level: 3, name: V, geo: 'WORK...', tool: 'D10-WGB', t: '15', blue: true },
  { kind: 'op', level: 3, name: V, geo: 'MCS', tool: 'D10-WGB', t: '15' },
  { kind: 'op', level: 3, name: 'VARIABLE_CONTOUR', geo: 'MCS', tool: 'D6', t: '6', blue: true, last: true },
];
const BLANK_ROWS = 24;

const Guides = ({ row }: { row: RowData }) => {
  if (row.kind === 'root') return null;
  const x = row.level * 19 - 8.5;
  const w = row.kind === 'unused' ? 21 : row.level * 19 + 5;
  return (
    <svg width={w} height="20" aria-hidden="true">
      <g stroke="#8a8a8a" strokeDasharray="1 1" fill="none">
        <path d={`M${x} ${row.kind === 'unused' ? 10 : 0}V${row.last ? 10 : 20}M${x} 9.500H${x + 9}`} />
        {row.level === 3 && row.more && <path d={`M${x - 19} 0V20`} />}
      </g>
      {row.kind === 'group' && (
        <g>
          <rect x={x - 4} y="5.500" width="8" height="8" rx="1" fill="#fff" stroke="#888" />
          <path d={`M${x - 2} 9.500h4`} stroke="#222" />
        </g>
      )}
    </svg>
  );
};
const Bang = () => (
  <svg width="13" height="18" aria-hidden="true">
    <path d="M1.500 3.500Q1.500 1 4.500 1T7.500 3.500L5.500 12h-2Z" fill="#f7e02a" stroke="#a8921c" strokeWidth=".9" />
    <circle cx="4.500" cy="15" r="1.700" fill="#f7e02a" stroke="#a8921c" strokeWidth=".9" />
  </svg>
);
const Folder = () => (
  <svg width="16" height="14" aria-hidden="true">
    <path d="M.5 1.500h5l1 2h7v9.500H.5Z" fill="#f3e6a8" stroke="#8c7a3c" />
    <path d="M5.500 4.500h8v8h-8Z" fill="#fff" stroke="#8c7a3c" />
    <path d="M7 6.500h4.500v2.500H8M11.500 9v2.500H7" fill="none" stroke="#22228c" strokeWidth="1.200" />
  </svg>
);
const OpIcon = () => (
  <svg width="16" height="16" aria-hidden="true">
    <path d="M3 7q2-2 4 0 3-4 5-1l2 2-2 3-2 1-2 2H5L3 11Z" fill="#fff" stroke="#222" strokeWidth="1.200" />
    <path d="M1 4l3-3 6 5-3 4Z" fill="#6a76cc" stroke="#2a2f80" strokeWidth=".8" />
  </svg>
);
const PathOk = () => (
  <svg width="14" height="14" viewBox="0 0 14 14" role="img" aria-label="Path generated">
    <path d="M1 8l3-1 1 2q3-4 7-6l1 1Q9 7 6 12H4Z" fill="#22c03a" stroke="#139a2a" strokeWidth=".8" />
  </svg>
);
const ScrollBar = styled.div`
  height: 18px;
  flex: none;
  display: flex;
  align-items: center;
  background: #f0f0f0;
`;
const ScrollArrow = styled.button`
  width: 18px;
  height: 16px;
  padding: 0;
  border: 0;
  background: none;
  display: grid;
  place-items: center;
`;
const Track = styled.div`flex: 1; height: 16px;`;
const Thumb = styled.div`
  width: 63%;
  height: 15px;
  display: grid;
  place-items: center;
  border: 1px solid #8a8a8a;
  border-radius: 2px;
  background: linear-gradient(#f4f4f4 45%, #d0d0d3 50%, #c6c6c9);
`;
const Splitter = styled.div`
  height: 15px;
  flex: none;
  display: flex;
  align-items: center;
  padding-bottom: 3px;
  gap: 4px;
  &::before, &::after { content: ""; flex: 1; height: 2px; border-top: 1px solid #aaa; background: #fff; }
`;
const SplitHandle = styled.span`
  width: 97px;
  height: 5px;
  border: 1px solid #aaa;
  border-top-color: #fff;
  background: #d0d0d0;
`;

const Navigator = () => (
  <Panel aria-label="Operation Navigator">
    <PanelTitle>
      <svg width="13" height="12" aria-hidden="true"><path d="M4 3Q5 1 8 1l3 1-1 5-4 2-3-2ZM3 8l-1 3M6 2l3 4" fill="#f0ee9a" stroke="#111" strokeWidth="1.300" /></svg>
      Operation Navigator - Program Order
    </PanelTitle>
    <TableBox>
      <Clip>
        <Table>
          <colgroup>
            <col style={{ width: 236 }} /><col style={{ width: 54 }} /><col style={{ width: 43 }} />
            <col style={{ width: 96 }} /><col style={{ width: 40 }} /><col />
          </colgroup>
          <thead>
            <tr>{['Name', 'Geo...', 'Path', 'Tool', 'To...', 'Stock'].map((h) => <Th key={h} scope="col">{h}</Th>)}</tr>
          </thead>
          <tbody>
            {ROWS.map((r, i) => (
              <Tr key={i} $alt={i % 2 === 1} $blue={r.blue} $sel={r.sel}>
                <Td>
                  <NameCell>
                    <Guides row={r} />
                    {(r.kind === 'group' || r.kind === 'op') && <Bang />}
                    {(r.kind === 'group' || r.kind === 'unused') && <Folder />}
                    {r.kind === 'op' && <OpIcon />}
                    <NameText $sel={r.sel} $root={r.kind === 'root'}>{r.name}</NameText>
                  </NameCell>
                </Td>
                <Td>{r.geo}</Td>
                <Td>{r.geo && <PathOk />}</Td>
                <Td>{r.tool}</Td>
                <Td>{r.t}</Td>
                <Td>{r.geo && '0.0000'}</Td>
              </Tr>
            ))}
            {Array.from({ length: BLANK_ROWS }, (_, i) => (
              <Tr key={`b${i}`} $alt={i % 2 === 1}><Td /><Td /><Td /><Td /><Td /><Td /></Tr>
            ))}
          </tbody>
        </Table>
      </Clip>
      <ScrollBar>
        <ScrollArrow aria-label="Scroll left"><svg width="4" height="6"><path d="M4 0v6L0 3Z" fill="#222" /></svg></ScrollArrow>
        <Track><Thumb><svg width="9" height="7"><path d="M1.500 0v7M4.500 0v7M7.500 0v7" stroke="#666" /></svg></Thumb></Track>
        <ScrollArrow aria-label="Scroll right"><svg width="4" height="6"><path d="M0 0v6L4 3Z" fill="#222" /></svg></ScrollArrow>
      </ScrollBar>
    </TableBox>
    <Splitter><SplitHandle /></Splitter>
  </Panel>
);

/* ---------- graphics window ---------- */

const View = styled.section`
  flex: 1;
  min-width: 0;
  background: linear-gradient(#b2b3b5 0%, #cdcecf 35%, #e3e4e6 60%, #e6e7e9 100%);
`;
const Scene = styled.svg`
  display: block;
  width: 100%;
  height: 100%;
`;

type P = [number, number];
/* Catmull-Rom spline through the points, written as cubic segments */
const spline = (pts: P[], closed = false) => {
  const n = pts.length;
  const get = (i: number): P => (closed ? pts[(i + n) % n] : pts[Math.max(0, Math.min(n - 1, i))]);
  let d = `M${pts[0][0]} ${pts[0][1]}`;
  for (let i = 0; i < (closed ? n : n - 1); i++) {
    const [a, b, c, e] = [get(i - 1), get(i), get(i + 1), get(i + 2)];
    const r = (v: number) => Math.round(v * 10) / 10;
    d += `C${r(b[0] + (c[0] - a[0]) / 6)} ${r(b[1] + (c[1] - a[1]) / 6)} ${r(c[0] - (e[0] - b[0]) / 6)} ${r(c[1] - (e[1] - b[1]) / 6)} ${c[0]} ${c[1]}`;
  }
  return closed ? d + 'Z' : d;
};

const BODY: P[] = [[772, 255], [793, 237], [818, 219], [847, 207], [880, 200], [907, 199], [947, 205], [999, 227], [1047, 257], [1097, 303], [1130, 353], [1153, 407], [1163, 460], [1162, 500], [1157, 530], [1143, 563], [1122, 593], [1097, 615], [1062, 645], [1030, 674]];
const BODY_PATH = spline(BODY) + 'L980 700L800 600L760 400Z';
const DARK: P[] = [[770, 262], [793, 242], [807, 238], [817, 240], [825, 248], [832, 267], [840, 285], [850, 305], [867, 325], [887, 340], [930, 367], [980, 402], [1013, 433], [1043, 475], [1057, 510], [1063, 543], [1063, 580], [1057, 617], [1047, 643], [1027, 674], [960, 720], [877, 740], [780, 715], [720, 670], [705, 590], [715, 420], [735, 320]];
const RING: P[] = [[793, 244], [802, 245], [812, 252], [819, 270], [825, 290], [833, 307], [843, 318], [860, 333], [880, 342], [907, 358], [940, 381], [960, 396], [980, 412], [1000, 432], [1014, 448], [1028, 468], [1040, 487], [1050, 512], [1057, 545], [1058, 585], [1051, 628], [1037, 657], [1023, 678], [997, 703], [963, 727], [920, 746], [877, 752], [827, 746], [780, 728], [740, 704], [717, 680], [705, 653], [697, 620], [694, 580], [695, 537], [700, 480], [705, 420], [706, 380], [710, 340], [720, 315], [740, 287], [763, 262]];
const HOLE: P[] = [[813, 278], [822, 284], [827, 300], [830, 327], [838, 347], [853, 363], [880, 377], [913, 400], [947, 428], [973, 457], [993, 481], [1007, 502], [1020, 533], [1025, 563], [1023, 603], [1010, 631], [985, 663], [965, 682], [930, 704], [900, 716], [877, 720], [847, 718], [803, 705], [757, 680], [730, 647], [720, 610], [719, 570], [723, 520], [730, 470], [735, 435], [737, 397], [743, 357], [753, 327], [773, 300], [797, 283]];
const CAVITY: P[] = [[813, 278], [822, 284], [827, 300], [830, 327], [838, 347], [853, 363], [880, 377], [913, 400], [947, 428], [973, 457], [993, 481], [1007, 502], [1020, 533], [1025, 563], [1023, 603], [1010, 631], [985, 663], [961, 685], [927, 702], [880, 712], [850, 712], [807, 698], [760, 673], [740, 650], [729, 620], [725, 587], [725, 537], [733, 470], [741, 430], [743, 393], [744, 357], [753, 327], [773, 300], [797, 283]];
const FLOOR_EDGE: P[] = [[830, 275], [807, 281], [787, 299], [774, 325], [768, 355], [767, 385], [772, 420], [782, 453], [797, 485], [830, 527], [867, 563], [900, 590], [940, 606], [987, 612], [1030, 606]];
const RIM: P[] = [[798, 280], [772, 310], [759, 345], [756, 390], [761, 430], [773, 470], [792, 505], [822, 543], [855, 574], [890, 597], [930, 612], [980, 619], [1024, 615]];
const HUB: P[] = [[899, 392], [892, 410], [893, 428], [900, 443], [913, 460], [930, 473], [946, 481], [962, 484], [980, 479], [1000, 470], [1000, 430], [940, 395]];

const WIRES: P[][] = [
  [[822, 222], [850, 209], [880, 202], [915, 202], [960, 211], [1000, 229]],
  [[780, 290], [800, 270], [830, 256], [880, 249], [930, 254], [980, 272], [1020, 298], [1060, 338], [1090, 390], [1110, 440], [1115, 485], [1108, 545], [1085, 590], [1050, 620], [1012, 634]],
  [[800, 275], [840, 259], [885, 254], [930, 260], [975, 273], [1015, 297], [1058, 340], [1088, 392], [1107, 440], [1111, 485], [1103, 545], [1080, 585], [1045, 612], [1010, 620]],
  [[701, 580], [702, 537], [706, 470], [712, 400], [714, 350], [725, 317], [745, 287], [770, 262], [795, 243]],
  [[748, 340], [755, 305], [775, 270], [790, 247]],
  [[744, 390], [749, 340], [768, 302], [800, 275], [820, 268], [833, 272], [839, 290], [843, 315], [852, 337], [875, 360], [920, 383], [965, 420], [1000, 455], [1023, 490], [1033, 540], [1031, 600], [1010, 645], [970, 680]],
  [[754, 420], [749, 370], [757, 330], [775, 300]],
  [[741, 430], [755, 470], [775, 515], [820, 570], [880, 610], [950, 635], [1020, 640], [1080, 630], [1125, 595], [1150, 555]],
  [[752, 450], [780, 505], [830, 565], [890, 605], [960, 625], [1015, 620]],
  [[893, 400], [893, 360], [905, 330], [930, 311], [955, 307], [990, 315], [1030, 342], [1055, 380], [1066, 420], [1063, 455], [1045, 480], [1010, 487], [980, 478]],
  [[901, 400], [897, 365], [910, 332], [932, 311], [955, 309], [990, 317]],
  [[870, 375], [868, 400], [875, 435], [895, 468], [925, 492], [960, 505], [985, 509], [1015, 502], [1040, 483]],
  [[890, 360], [900, 335], [920, 328], [950, 327], [985, 340], [1015, 368], [1022, 395], [1020, 425]],
  [[935, 385], [935, 365], [950, 350], [970, 346], [1000, 356], [1020, 378], [1029, 405], [1023, 430]],
  [[940, 398], [934, 380], [943, 358], [965, 352], [990, 360]],
  [[897, 405], [905, 388], [925, 383], [945, 385], [970, 405], [985, 432], [984, 455], [965, 480]],
  [[900, 410], [915, 389], [945, 388], [972, 410], [988, 440], [982, 470]],
  [[899, 400], [910, 435], [935, 465], [965, 475]],
  [[980, 440], [1000, 448], [1020, 442], [1037, 425]],
  [[998, 228], [950, 268], [875, 332]],
  [[975, 273], [925, 313]],
  [[997, 320], [976, 336]],
  [[992, 352], [952, 388]],
  [[970, 440], [928, 477]],
  [[955, 483], [936, 498]],
  [[891, 604], [850, 639], [789, 691]],
  [[908, 612], [850, 660], [782, 719]],
  [[701, 580], [705, 640], [722, 680], [745, 700], [800, 730], [870, 745], [930, 738], [990, 708], [1023, 678]],
  [[1162, 450], [1161, 510], [1148, 555], [1120, 592], [1080, 620], [1010, 637]],
];
const RING_EDGES = 'M713 387L743 394M796 247L812 270M873 339L868 359M881 342L878 358M1030 512L1057 514M1011 636L1036 656M757 676L747 697M851 713L855 744M904 355L896 374';

const Axis = ({ from, to, color, text, label, dark }: { from: P; to: P; color: string; text: string; label: P; dark: string }) => {
  const ang = (Math.atan2(to[1] - from[1], to[0] - from[0]) * 180) / Math.PI;
  return (
    <g>
      <path d={`M${from[0]} ${from[1]}L${to[0]} ${to[1]}`} stroke={color} strokeWidth="1.500" />
      <g transform={`translate(${to[0]} ${to[1]}) rotate(${ang})`}>
        <path d="M4 0L-12 -4v8Z" fill={color} />
        <ellipse cx="-12" cy="0" rx="2" ry="4" fill={dark} />
      </g>
      <text x={label[0]} y={label[1]} fontSize="13" fill={dark} fontFamily="Liberation Sans">{text}</text>
    </g>
  );
};

const Viewport = () => (
  <View aria-label="Graphics window">
    <Scene viewBox="569 170 871 695" preserveAspectRatio="xMidYMid meet" fill="none" role="img" aria-label="Shaded part with tool path">
      <defs>
        <linearGradient id="gBody" gradientUnits="userSpaceOnUse" x1="900" y1="250" x2="1140" y2="590">
          <stop offset="0" stopColor="#e0ca6e" /><stop offset=".35" stopColor="#dec76c" />
          <stop offset=".58" stopColor="#bda85b" /><stop offset=".8" stopColor="#94834a" />
          <stop offset="1" stopColor="#574b27" />
        </linearGradient>
        <linearGradient id="gShade" gradientUnits="userSpaceOnUse" x1="795" y1="225" x2="855" y2="255">
          <stop offset="0" stopColor="#6a5b2f" stopOpacity=".75" /><stop offset="1" stopColor="#6a5b2f" stopOpacity="0" />
        </linearGradient>
        <linearGradient id="gWall" gradientUnits="userSpaceOnUse" x1="735" y1="440" x2="950" y2="715">
          <stop offset="0" stopColor="#a8964f" /><stop offset=".3" stopColor="#cdb763" />
          <stop offset=".55" stopColor="#e2cc70" /><stop offset=".8" stopColor="#d8c269" />
          <stop offset="1" stopColor="#a08e4e" />
        </linearGradient>
        <linearGradient id="gHub" gradientUnits="userSpaceOnUse" x1="895" y1="400" x2="960" y2="480">
          <stop offset="0" stopColor="#6b5c30" /><stop offset=".35" stopColor="#a8964f" />
          <stop offset=".75" stopColor="#dcc66c" /><stop offset="1" stopColor="#efe08c" />
        </linearGradient>
        <linearGradient id="gRimDark" gradientUnits="userSpaceOnUse" x1="760" y1="300" x2="790" y2="560">
          <stop offset="0" stopColor="#5c4f28" /><stop offset=".4" stopColor="#6b5c30" stopOpacity=".9" />
          <stop offset="1" stopColor="#8a7841" stopOpacity="0" />
        </linearGradient>
        <linearGradient id="gRimLight" gradientUnits="userSpaceOnUse" x1="765" y1="440" x2="1020" y2="620">
          <stop offset="0" stopColor="#f4e692" stopOpacity="0" /><stop offset=".25" stopColor="#f4e692" />
          <stop offset=".55" stopColor="#f6e896" /><stop offset="1" stopColor="#d8c46c" stopOpacity=".4" />
        </linearGradient>
        <filter id="soft" x="-20%" y="-20%" width="140%" height="140%"><feGaussianBlur stdDeviation="3" /></filter>
        <clipPath id="cavity"><path d={spline(CAVITY, true)} /></clipPath>
      </defs>
      <path d={BODY_PATH} fill="url(#gBody)" />
      <path d={BODY_PATH} fill="url(#gShade)" />
      <path d={spline(DARK, true)} fill="#003c3c" />
      <path d={spline(RING, true)} fill="#00ffff" />
      <path d={spline(HOLE, true)} fill="#004848" />
      <g clipPath="url(#cavity)">
        <path d="M690 260h380v480H690Z" fill="url(#gWall)" />
        <path d={spline(RIM)} stroke="url(#gRimDark)" strokeWidth="16" filter="url(#soft)" />
        <path d={spline(RIM.slice(4))} stroke="#8a7841" strokeWidth="8" filter="url(#soft)" transform="translate(7 -5)" />
        <path d={spline(RIM.slice(4))} stroke="url(#gRimLight)" strokeWidth="7" filter="url(#soft)" />
        <path d={spline(FLOOR_EDGE) + 'L1060 400L900 250Z'} fill="#6b5d32" />
        <path d={spline(FLOOR_EDGE)} stroke="#b7a35b" />
        <path d={spline(HUB, true)} fill="url(#gHub)" />
      </g>
      <g stroke="#9a8845" strokeWidth="1" opacity=".85">
        {WIRES.map((w, i) => <path key={i} d={spline(w)} />)}
        <path d={spline(BODY)} />
      </g>
      <path d={RING_EDGES} stroke="#00605c" strokeWidth="1" />
      <Axis from={[981, 397]} to={[1029, 357]} color="#e08a7a" dark="#b5402c" text="XM" label={[1014, 349]} />
      <Axis from={[981, 397]} to={[1004, 378]} color="#e08a7a" dark="#c04030" text="XC" label={[992, 369]} />
      <Axis from={[981, 397]} to={[1065, 438]} color="#9ad88a" dark="#4c9838" text="YM" label={[1048, 455]} />
      <Axis from={[981, 397]} to={[1020, 416]} color="#9ad88a" dark="#4c9838" text="YC" label={[1010, 434]} />
      <Axis from={[981, 397]} to={[963, 474]} color="#4a66c8" dark="#2a48c0" text="ZM" label={[964, 490]} />
      <Axis from={[981, 397]} to={[972, 434]} color="#4a66c8" dark="#2a62c8" text="ZC" label={[974, 452]} />
      <path d="M1042 401L1034 438M1092 485L1073 522" stroke="#2a1a9c" strokeWidth="1.500" strokeDasharray="2 1" />
      <path d="M1034 438L1028 466" stroke="#e8b8b0" strokeWidth="2" />
      <path d="M1052 522Q1058 533 1067 534L1073 522" stroke="#f0b81e" strokeWidth="1.500" />

      <path d="M605 797l20 8-5 27-13 2-17-9 3-20Z" fill="#cfd0d2" fillOpacity=".7" stroke="#999" />
      <path d="M605 797l-3 17-12 11M602 814l18 6" stroke="#a8a8a8" />
      <path d="M625 805L602 795" stroke="#c83a34" strokeWidth="2.500" /><path d="M593 790l13 3-3 5Z" fill="#c83a34" />
      <path d="M625 805L618 830" stroke="#1f6a2a" strokeWidth="2" /><path d="M618 838l-3-11h6Z" fill="#1f6a2a" />
      <path d="M624 807L611 819" stroke="#1a48e0" strokeWidth="3.500" /><path d="M605 823l5-9 5 5Z" fill="#1a48e0" />
      <circle cx="625" cy="806" r="4" fill="#f4f4f4" stroke="#bbb" />
      <g fontFamily="Liberation Sans" fontSize="11">
        <text x="584" y="792" fill="#c83a34">X</text>
        <text x="599" y="830" fill="#2a52e0">Z</text>
        <text x="613" y="846" fill="#2a7a34">Y</text>
      </g>
    </Scene>
  </View>
);

/* ---------- bottom bar and overlays ---------- */

const BottomBar = styled.footer`
  height: 35px;
  flex: none;
  display: flex;
  border-top: 1px solid #f2f2f2;
  background: linear-gradient(#e4e5e6, #c9c9c9);
`;
const UploadBadge = styled.button`
  position: absolute;
  top: 56px;
  right: 0;
  width: 90px;
  height: 25px;
  padding: 0;
  display: flex;
  align-items: center;
  overflow: hidden;
  border: 1px solid #4a86e8;
  border-right: 0;
  border-radius: 3px 0 0 3px;
  background: #e6f0fd;
  color: #5f95ea;
  white-space: nowrap;
`;
const BadgeMark = styled.span`
  width: 29px;
  height: 25px;
  flex: none;
  margin-right: 13px;
  display: grid;
  place-items: center;
  background: #4c8ff5;
`;
const Watermark = styled.div`
  position: absolute;
  right: 25px;
  bottom: 13px;
  display: flex;
  align-items: center;
  gap: 8px;
  color: #f3f3f4;
  pointer-events: none;
`;
const MarkText = styled.div`
  display: flex;
  flex-direction: column;
  align-items: center;
`;
const MarkName = styled.span`
  height: 48px;
  display: flex;
  align-items: center;
  font: 700 40px/44px "Noto Sans CJK SC", sans-serif;
`;
const MarkLatin = styled.span`
  font: 700 44px/44px "Liberation Sans", sans-serif;
`;
const MarkUrl = styled.span`
  font: 700 16px/18px "DejaVu Sans", sans-serif;
`;

const MENUS: [string, string, string][] = [
  ['', 'F', 'ile'], ['', 'E', 'dit'], ['', 'V', 'iew'], ['In', 's', 'ert'], ['Fo', 'r', 'mat'], ['', 'T', 'ools'],
  ['', 'A', 'ssemblies'], ['UP SOFTWAER', '', ''], ['', 'I', 'nformation'], ['Ana', 'l', 'ysis'], ['', 'P', 'references'],
  ['Applicatio', 'n', ''], ['Wind', 'o', 'w'], ['GC Toolkits', '', ''], ['', 'H', 'elp'], ['乐清虹桥', '', ''], ['HB_MOULD ', 'M', '6.8'],
];
const TABS: [string, boolean?][] = [['tAssembly'], ['tConstraint'], ['tPart'], ['tNav'], ['tMachine'], ['tWizard'], ['tBooks'], ['tHd3d', true], ['tWeb', true], ['tClock', true], ['tRoles'], ['tDrill'], ['tPeople'], ['tScene']];

const MinGlyph = ({ c }: { c: string }) => <svg width="11" height="11"><path d="M1 8.500h6" stroke={c} strokeWidth="3" /></svg>;
const RestoreGlyph = ({ c }: { c: string }) => <svg width="11" height="11"><path d="M3.500 3V1h6v5H8M1.500 4.500h6v5h-6z" fill="none" stroke={c} strokeWidth="1.600" /></svg>;
const CloseGlyph = ({ c }: { c: string }) => <svg width="11" height="11"><path d="M1.500 1.500l8 8M9.500 1.500l-8 8" stroke={c} strokeWidth="2" /></svg>;

export default function App() {
  return (
    <Shell>
      <GlobalStyle />
      <Frame>
        <TitleBar>
          <Icon name="start" size={17} />
          <TitleText>NX 8.5 - Manufacturing - [4.prt (Modified) ]</TitleText>
          <Brand>SIEMENS</Brand>
          <WindowButton aria-label="Minimize"><MinGlyph c="#fff" /></WindowButton>
          <WindowButton aria-label="Restore"><RestoreGlyph c="#fff" /></WindowButton>
          <WindowButton $close aria-label="Close"><CloseGlyph c="#fff" /></WindowButton>
        </TitleBar>
        <MenuBar aria-label="Main menu">
          <Icon name="generate" size={18} />
          <MenuList>
            {MENUS.map(([a, u, b]) => <li key={a + u + b}><MenuButton>{a}{u && <u>{u}</u>}{b}</MenuButton></li>)}
          </MenuList>
          <ChildButton aria-label="Minimize part"><MinGlyph c="#555" /></ChildButton>
          <ChildButton aria-label="Restore part"><RestoreGlyph c="#555" /></ChildButton>
          <ChildButton aria-label="Close part"><CloseGlyph c="#555" /></ChildButton>
        </MenuBar>
        <ToolRow $shade="light">
          <Tools name="Standard" items={['start', { label: 'Start', w: 28 }, 'v', 'new', 'open', 'recent', { label: 'Open a Recent Part', w: 113 }, 'v', 'save', 'print', '|', 'delete', '|', 'undo', '|', 'finder', { label: 'Command Finder', w: 103 }, 'refresh', 'v', '|', 'orient', 'move', 'equals', 'props', '|', 'info', '|', 'whats', 'help', 'V']} />
          <Tools name="View" items={['fit', 'v', 'rotate', 'v', 'shadedEdges', 'shaded', 'wireDim', 'wireHidden', 'wireStatic', 'studio', 'analysis', 'partial', 'reflect', 'section', 'V']} />
        </ToolRow>
        <ToolRow $shade="mid">
          <Tools name="Operation" items={['opEdit', 'opCut', 'opCopy', 'opPaste', 'opRename', 'opDelete', 'opProps', 'opInfo', 'opShow', 'V']} />
          <Tools name="Path" items={['generate', 'pathEdit', 'pathDelete', 'pathReplay', 'verify', 'listPath', 'simulate', 'compare', '|', 'feed', 'post', 'shop', 'V']} />
          <Tools name="Navigator views" on="viewProgram" items={['viewProgram', 'viewTool', 'viewGeom', 'viewMethod', 'V']} />
          <Tools name="Insert" items={['newProgram', 'newTool', 'newGeom', 'newMethod', 'newOp', 'V']} />
          <Tools name="Export" items={['post', 'excel', 'V']} />
        </ToolRow>
        <FilterRow role="toolbar" aria-label="Selection">
          <Dropdown name="Selection filter" value="No Selection Filter" w={143} />
          <Dropdown name="Selection scope" value="Entire Assembly" w={151} m="0 4px 0 0" />
          <Strip small on="sCube2" items={['sOp', '|', 'sFilter', 'sBox', 'v', 'sDim', 'sHammer', '|', 'sRect', 'v', '|', 'sCube1', 'sCube2']} />
          <Spacer />
          <ArrowButton $low aria-label="Toolbar options"><Caret /></ArrowButton>
        </FilterRow>
        <StatusRow>
          <StatusCell>Drag cursor to rotate view about X-Y</StatusCell>
          <StatusCell $w={681} />
          <StatusCell $w={20} />
          <StatusCell $w={36} />
          <StatusCell $w={20}>
            <svg width="15" height="15" aria-hidden="true"><path d="M1 4V1h3M11 1h3v3M14 11v3h-3M4 14H1v-3" fill="none" stroke="#555" /><rect x="3.500" y="3.500" width="8" height="8" fill="#8fc0ee" stroke="#222" strokeWidth="1.500" /></svg>
          </StatusCell>
        </StatusRow>
        <Body>
          <Side>
            {TABS.map(([name, gap]) => (
              <SideTab key={name} $gap={gap} $active={name === 'tNav'} aria-label={name}><Icon name={name} size={24} /></SideTab>
            ))}
          </Side>
          <Navigator />
          <Viewport />
        </Body>
        <BottomBar>
          <Group role="toolbar" aria-label="Utility">
            <Grip />
            <Dropdown name="Work layer" value="1" w={47} m="0 5px 0 3px" />
            <Strip items={['layers', 'layers', 'v', 'wcs', 'v', '|', 'handDiamond', 'palette', '|', 'goDiamond', 'v', 'goDiamond', 'pickDiamond', 'two1', 'two2', 'two3', '|', 'grid', 'snapGrid', 'plane', 'planeDim', '|', 'distance', 'v', 'measure', 'V']} />
          </Group>
          <Tools name="Analysis" items={['line', 'comb', 'v', '|', 'faceCurve', 'gauge', 'v', 'checkPatch', '|', 'draft', 'v', 'rainbow', '|', 'magnify', 'v', 'sectionBox', 'v', 'V']} />
        </BottomBar>
      </Frame>
      <UploadBadge>
        <BadgeMark>
          <svg width="20" height="16" viewBox="0 0 20 16" aria-hidden="true"><g fill="none" stroke="#fff" strokeWidth="2.500"><circle cx="10" cy="5" r="3.500" /><circle cx="5" cy="11" r="3.500" /><circle cx="15" cy="11" r="3.500" /></g></svg>
        </BadgeMark>
        拖拽上传
      </UploadBadge>
      <Watermark>
        <svg width="73" height="82" viewBox="0 0 73 82" aria-hidden="true">
          <path d="M36 0l36 20v41L36 82 0 61V20Z" fill="#8ccdf0" />
          <path d="M36 0L0 20v2q20-8 36-2l14-12Z" fill="#c6e3f4" />
          <path d="M0 22v38q2-16 18-26l16-16Q18 12 0 22" fill="#addaf3" />
          <path d="M50 8l22 12v20L54 52V28Z" fill="#82c9f0" />
          <path d="M72 40v21L36 82 22 74l-5-22q14 14 40 15 12-10 15-27Z" fill="#6bbce6" />
          <path d="M36 19l18 11v23L36 63 17 53V30Z" fill="#e6e7e9" />
          <path d="M36 22l16 9-16 9-16-9Z" fill="#a9d9f3" />
          <path d="M20 32l15 9v18l-15-9Z" fill="#8ccbee" />
          <path d="M52 32l-15 9v18l15-9Z" fill="#6fbde5" />
          <path d="M0 22Q20 6 36 19M50 8q8 20 4 44M72 40Q60 62 36 63M57 67Q30 68 17 52M22 74Q14 62 17 50M17 30Q4 40 0 60" fill="none" stroke="#e2eef5" />
        </svg>
        <MarkText>
          <MarkName><MarkLatin>3D</MarkLatin>世界网</MarkName>
          <MarkUrl>WWW.3DSJW.COM</MarkUrl>
        </MarkText>
      </Watermark>
    </Shell>
  );
}
